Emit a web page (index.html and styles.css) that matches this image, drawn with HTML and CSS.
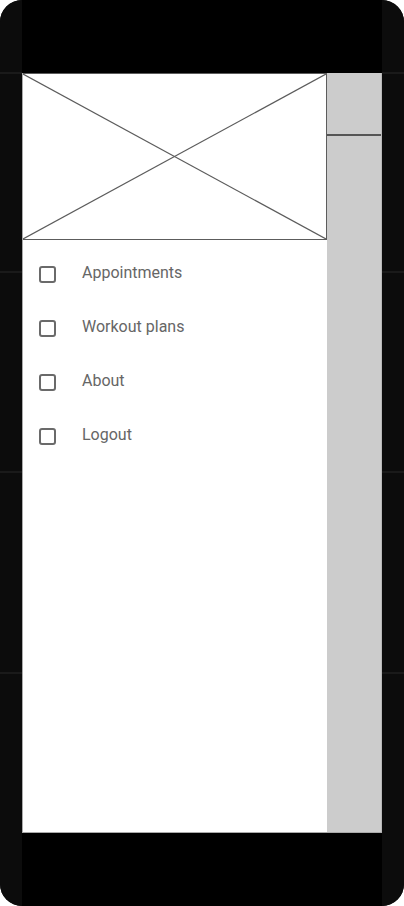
FILE: index.html
```html
<!DOCTYPE html>
<html>
<head>
<meta charset="utf-8">
<link rel="stylesheet" href="styles.css">
</head>
<body>
<div class="phone">
  <div class="side"></div>
  <div class="column">
    <div class="status-bar"></div>
    <div class="screen">
      <div class="drawer">
        <div class="header-image">
          <svg class="cross" viewBox="0 0 100 100" preserveAspectRatio="none">
            <line x1="0" y1="0" x2="100" y2="100" vector-effect="non-scaling-stroke"/>
            <line x1="100" y1="0" x2="0" y2="100" vector-effect="non-scaling-stroke"/>
          </svg>
        </div>
        <ul class="menu">
          <li class="menu-item"><span class="checkbox"></span><span class="label">Appointments</span></li>
          <li class="menu-item"><span class="checkbox"></span><span class="label">Workout plans</span></li>
          <li class="menu-item"><span class="checkbox"></span><span class="label">About</span></li>
          <li class="menu-item"><span class="checkbox"></span><span class="label">Logout</span></li>
        </ul>
      </div>
      <div class="scrim">
        <div class="toolbar"></div>
      </div>
    </div>
    <div class="nav-bar"></div>
  </div>
  <div class="side"></div>
</div>
</body>
</html>
```

FILE: styles.css
```css
html, body {
  margin: 0;
  padding: 0;
  background: #ffffff;
}

.phone {
  width: 404px;
  height: 906px;
  display: flex;
  border-radius: 22px;
  overflow: hidden;
  background: #0c0c0c;
}

.side {
  width: 22px;
  flex: none;
  background:
    linear-gradient(#1a1a1a, #1a1a1a) 0 72px / 100% 2px no-repeat,
    linear-gradient(#1a1a1a, #1a1a1a) 0 271px / 100% 2px no-repeat,
    linear-gradient(#1a1a1a, #1a1a1a) 0 471px / 100% 2px no-repeat,
    linear-gradient(#1a1a1a, #1a1a1a) 0 672px / 100% 2px no-repeat,
    #0c0c0c;
}

.column {
  flex: 1;
  display: flex;
  flex-direction: column;
}

.status-bar {
  height: 73px;
  background: #000000;
  flex: none;
}

.nav-bar {
  flex: 1;
  background: #000000;
}

.screen {
  height: 760px;
  flex: none;
  display: flex;
  box-sizing: border-box;
  border-left: 1px solid #aaaaaa;
  border-bottom: 1px solid #aaaaaa;
}

.drawer {
  width: 304px;
  flex: none;
  background: #ffffff;
  display: flex;
  flex-direction: column;
}

.header-image {
  height: 167px;
  box-sizing: border-box;
  border: 1px solid #5c5c5c;
  border-left: none;
  display: flex;
}

.cross {
  width: 100%;
  height: 100%;
  display: block;
}

.cross line {
  stroke: #5c5c5c;
  stroke-width: 1.2;
}

.menu {
  list-style: none;
  margin: 0;
  padding: 7px 0 0 0;
}

.menu-item {
  height: 54px;
  display: flex;
  align-items: center;
  padding-left: 16px;
}

.checkbox {
  width: 17px;
  height: 17px;
  box-sizing: border-box;
  border: 2px solid #6a6a6a;
  border-radius: 3px;
  flex: none;
}

.label {
  margin-left: 26px;
  padding-bottom: 2px;
  font-family: Roboto, "Liberation Sans", sans-serif;
  font-size: 16px;
  color: #666666;
  line-height: 20px;
}

.scrim {
  flex: 1;
  background: #cccccc;
  border-right: 1px solid #b8b8b8;
}

.toolbar {
  height: 61px;
  border-bottom: 2px solid #555555;
}
```
